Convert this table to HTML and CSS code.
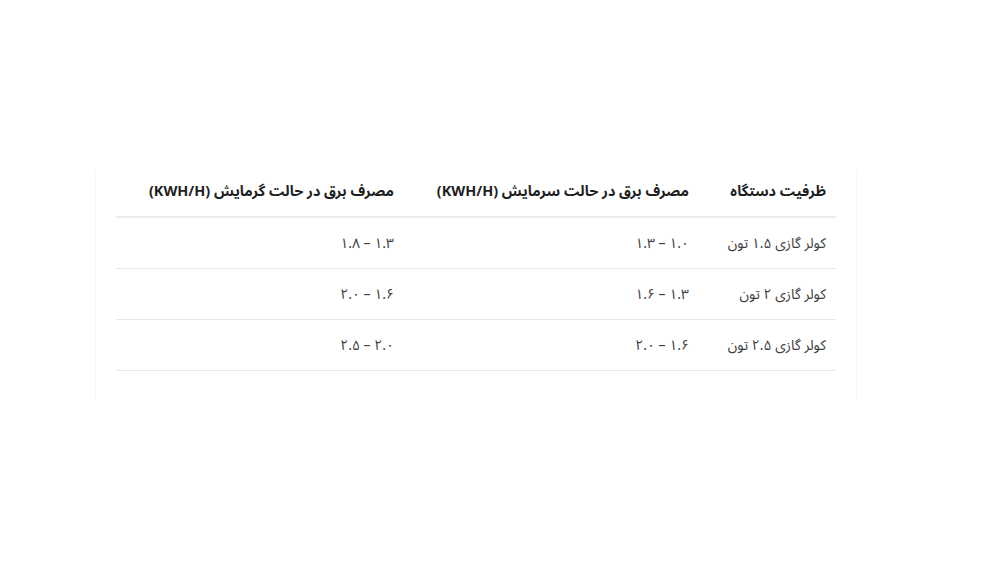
FILE: index.html
```html
<!DOCTYPE html>
<html lang="fa" dir="rtl">
<head>
<meta charset="utf-8">
<title>مصرف برق کولر گازی</title>
<link rel="stylesheet" href="styles.css">
</head>
<body>
<div class="page">
  <div class="box">
    <table class="spec">
      <colgroup>
        <col class="c1">
        <col class="c2">
        <col class="c3">
      </colgroup>
      <thead>
        <tr>
          <th>ظرفیت دستگاه</th>
          <th>مصرف برق در حالت سرمایش (KWH/H)</th>
          <th>مصرف برق در حالت گرمایش (KWH/H)</th>
        </tr>
      </thead>
      <tbody>
        <tr>
          <td>کولر گازی ۱.۵ تون</td>
          <td>۱.۰ – ۱.۳</td>
          <td>۱.۳ – ۱.۸</td>
        </tr>
        <tr>
          <td>کولر گازی ۲ تون</td>
          <td>۱.۳ – ۱.۶</td>
          <td>۱.۶ – ۲.۰</td>
        </tr>
        <tr>
          <td>کولر گازی ۲.۵ تون</td>
          <td>۱.۶ – ۲.۰</td>
          <td>۲.۰ – ۲.۵</td>
        </tr>
      </tbody>
    </table>
  </div>
</div>
</body>
</html>
```
FILE: styles.css
```css
html, body {
  margin: 0;
  padding: 0;
  background: #ffffff;
}
body {
  font-family: "Noto Sans Arabic", "DejaVu Sans", sans-serif;
  color: #3a3a3a;
}
.page {
  padding-top: 172px;
  padding-right: 149px;
  display: flex;
  justify-content: flex-start;
}
.box {
  width: 720px;
  padding: 0 20px 28px 20px;
  border-left: 1px solid #f6f6f6;
  border-right: 1px solid #f6f6f6;
}
.spec {
  width: 720px;
  border-collapse: collapse;
  table-layout: fixed;
}
.c1 { width: 137px; }
.c2 { width: 295px; }
.c3 { width: 288px; }
.spec th {
  text-align: right;
  font-weight: bold;
  font-size: 14.4px;
  color: #1e1e1e;
  padding: 4px 10px 0 10px;
  height: 40px;
  vertical-align: top;
  border-bottom: 2px solid #ececec;
  white-space: nowrap;
}
.spec td {
  text-align: right;
  font-size: 14px;
  color: #3d3d3d;
  padding: 0 10px;
  height: 50px;
  vertical-align: middle;
  border-bottom: 1px solid #e6e6e6;
  white-space: nowrap;
}
```
